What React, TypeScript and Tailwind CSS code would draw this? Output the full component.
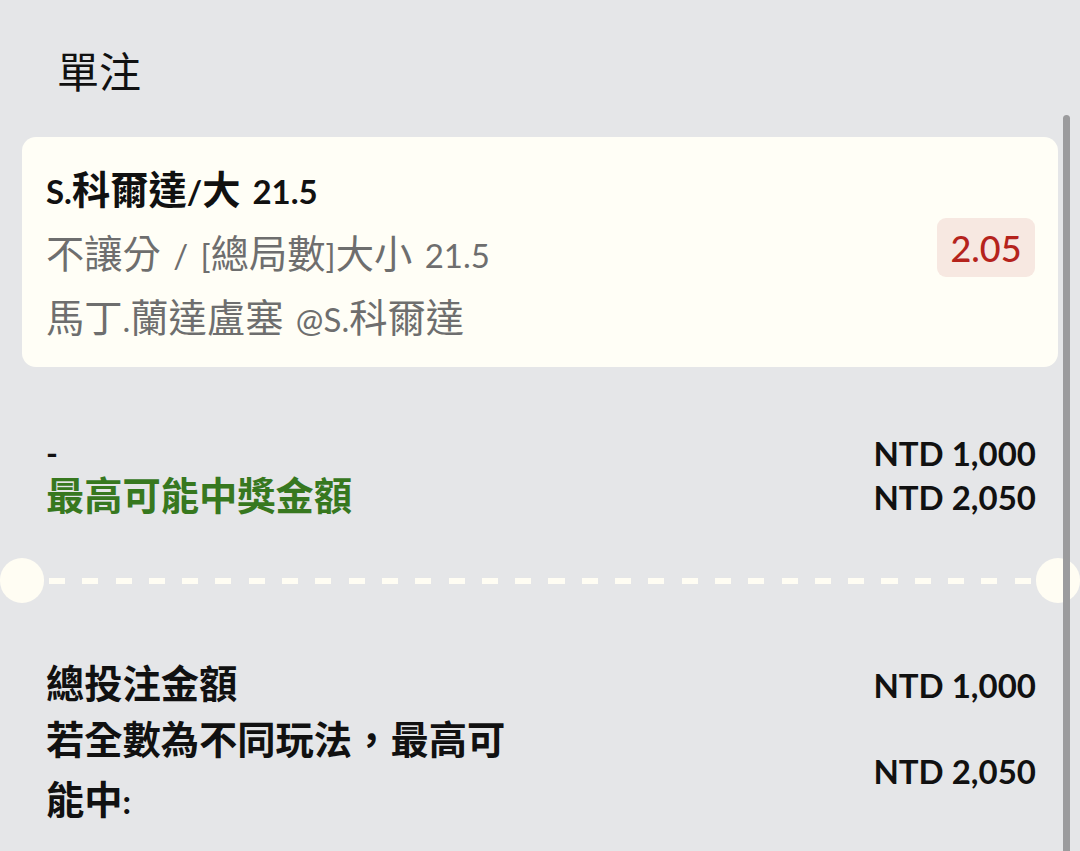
import React from "react";

// CJK runs render larger than the Latin text in the reference
function Mixed({ text }: { text: string }) {
  const parts = text.split(/([\u2E80-\u9FFF\uFF00-\uFFEF]+)/);
  return (
    <>
      {parts.map((p, i) =>
        i % 2 === 1 ? (
          <span key={i} className="text-[1.16em] leading-[0]">
            {p}
          </span>
        ) : (
          <React.Fragment key={i}>{p}</React.Fragment>
        )
      )}
    </>
  );
}

function Amount({ value }: { value: string }) {
  return <span className="text-[33px] font-bold leading-[44px] text-[#111]">{value}</span>;
}

export default function App() {
  return (
    <div className="relative min-h-[851px] overflow-hidden bg-[#e5e6e8] font-[Lato,'Noto_Sans_CJK_TC',sans-serif]">
      <div className="h-[137px] pl-[57px] pt-[44px]">
        <h1 className="font-['Noto_Sans_CJK_TC',sans-serif] text-[42px] font-normal leading-[52px] text-[#111]">
          單注
        </h1>
      </div>

      <div className="mx-[22px] flex h-[230px] items-start justify-between rounded-[14px] bg-[#fffef6] pl-[24px] pr-[23px] pt-[22px]">
        <div className="text-[33px] leading-[64px] [word-spacing:4px]">
          <p className="font-bold text-[#111]">
            <Mixed text="S.科爾達/大 21.5" />
          </p>
          <p className="text-[#6e6e6e]">
            <Mixed text="不讓分 / [總局數]大小 21.5" />
          </p>
          <p className="text-[#6e6e6e]">
            <Mixed text="馬丁.蘭達盧塞 @S.科爾達" />
          </p>
        </div>
        <div className="mt-[59px] flex h-[59px] w-[98px] items-center justify-center rounded-[9px] bg-[#f7e8e1] text-[36px] font-medium text-[#b5231c]">
          2.05
        </div>
      </div>

      <div className="pl-[46px] pr-[44px] pt-[64px]">
        <div className="flex items-center justify-between">
          <span className="text-[32px] font-bold leading-[44px] text-[#111]">-</span>
          <Amount value="NTD 1,000" />
        </div>
        <div className="flex items-center justify-between">
          <span className="text-[33px] font-bold leading-[44px] text-[#37781f]">
            <Mixed text="最高可能中獎金額" />
          </span>
          <Amount value="NTD 2,050" />
        </div>
      </div>

      <div className="mt-[39px] flex items-center">
        <div className="h-[45px] w-[44px] shrink-0 rounded-full bg-[#fffdf3]" />
        <div className="mx-[5px] h-[6px] flex-1 bg-[repeating-linear-gradient(90deg,#fffdf3_0_16px,transparent_16px_33.3px)]" />
        <div className="h-[45px] w-[44px] shrink-0 rounded-full bg-[#fffdf3]" />
      </div>

      <div className="pl-[46px] pr-[44px] pt-[60px]">
        <div className="flex items-center justify-between">
          <span className="text-[33px] font-bold leading-[44px] text-[#111]">
            <Mixed text="總投注金額" />
          </span>
          <Amount value="NTD 1,000" />
        </div>
        <div className="mt-[4px] flex items-center justify-between">
          <p className="w-[480px] text-[33px] font-bold leading-[60px] text-[#111]">
            <Mixed text="若全數為不同玩法，最高可能中:" />
          </p>
          <Amount value="NTD 2,050" />
        </div>
      </div>

      <div className="absolute bottom-0 right-[10px] top-[115px] w-[7px] rounded-t-full bg-[#9b9b9d]" />
    </div>
  );
}
